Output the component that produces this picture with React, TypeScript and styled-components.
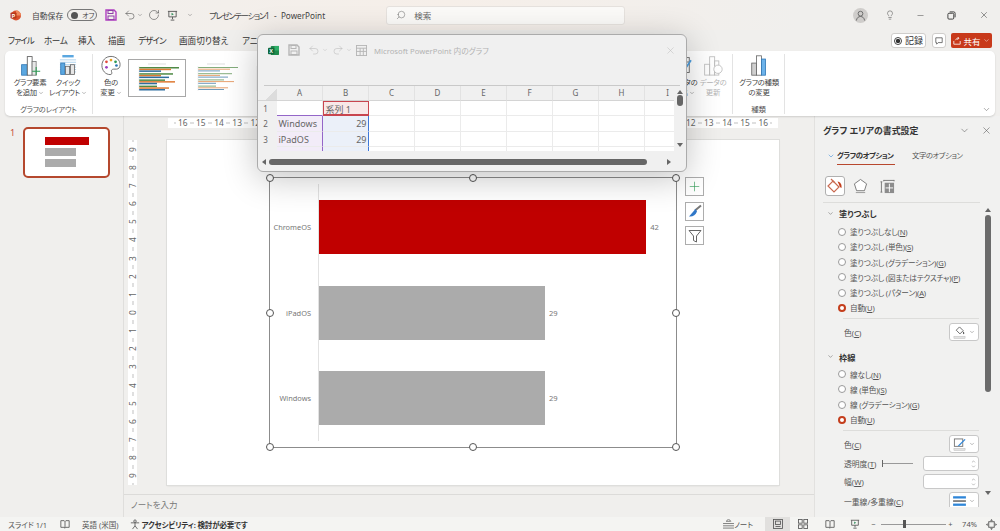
import React from "react";
import styled, { createGlobalStyle } from "styled-components";
import { ChevronDown, ChevronUp, X, Minus, Lightbulb, Search, Undo2, RotateCw, Plus } from "lucide-react";

const Global = createGlobalStyle`
  html, body { margin: 0; padding: 0; background: #f0efed; }
  body { font-family: "Noto Sans", "Noto Sans CJK JP", sans-serif; font-feature-settings: "palt"; color: #444; }
  u { text-underline-offset: 1px; }
`;

const Page = styled.div`
  position: relative; width: 1000px; height: 531px; overflow: hidden;
  display: flex; flex-direction: column; background: #f0efed;
`;
const TitleBar = styled.div`
  height: 30px; display: flex; align-items: center; padding-left: 10px; flex: none;
  background: linear-gradient(90deg, #f0efed 0%, #f6efe9 45%, #f0efed 80%);
  font-size: 7.8px;
`;
const Slot = styled.span<{ $l?: number; $w?: number }>`
  display: inline-flex; align-items: center; justify-content: center; flex: none; white-space: pre;
  margin-left: ${p => p.$l ?? 0}px; ${p => (p.$w ? `width:${p.$w}px;` : "")}
`;
const DocTitle = styled.span`
  width: 113px; margin-left: 16px; flex: none; white-space: pre; font-size: 8.2px;
  b { font-weight: 400; letter-spacing: -1.15px; }
`;
const Toggle = styled.span`
  width: 30px; height: 12px; border: 1px solid #777; border-radius: 7px; box-sizing: border-box;
  display: flex; align-items: center; gap: 4px; padding-left: 3px; font-size: 7px; margin-left: 4px; flex: none;
  &::before { content: ""; width: 7px; height: 7px; border-radius: 50%; background: #555; }
`;
const SearchBox = styled.div`
  width: 239px; height: 19px; box-sizing: border-box; margin-left: 64px; flex: none;
  background: #fbfaf8; border: 1px solid #e6e2de; border-radius: 3px;
  display: flex; align-items: center; gap: 8px; padding-left: 9px; color: #666; font-size: 8.5px;
`;
const Avatar = styled.span`
  width: 15px; height: 15px; border-radius: 50%; background: #cfcdcb; margin-left: 228px; flex: none;
  display: flex; align-items: center; justify-content: center;
`;
const TabRow = styled.div`
  height: 21px; flex: none; display: flex; align-items: center; padding: 0 8px; font-size: 8.6px; color: #333;
`;
const Tab = styled.span<{ $w: number; $sp?: number }>`
  width: ${p => p.$w}px; flex: none; white-space: nowrap; letter-spacing: ${p => p.$sp ?? 0}px;
`;
const RightBtns = styled.div`margin-left: auto; display: flex; align-items: center; gap: 5.5px;`;
const Outline = styled.div<{ $w: number }>`
  height: 15px; width: ${p => p.$w}px; box-sizing: border-box; background: #fff; border: 1px solid #cfcdcb; border-radius: 3px;
  display: flex; align-items: center; justify-content: center; gap: 3px; font-size: 9px; color: #333;
`;
const Share = styled.div`
  height: 15px; width: 41px; box-sizing: border-box; background: #c8391a; color: #fff; border-radius: 2px;
  display: flex; align-items: center; justify-content: center; gap: 2px; font-size: 8.5px;
`;
const RecDot = styled.span`
  width: 8px; height: 8px; border: 1px solid #444; border-radius: 50%; box-sizing: border-box;
  background: radial-gradient(circle, #333 0 2px, #fff 2.3px);
`;
const Ribbon = styled.div`
  height: 65px; flex: none; margin: 0 5px; background: #fff; border-radius: 5px;
  box-shadow: 0 1px 2px rgba(0,0,0,.14); display: flex; position: relative; overflow: hidden;
`;
const Group = styled.div<{ $w?: number; $grow?: boolean; $plain?: boolean }>`
  ${p => (p.$w ? `width:${p.$w}px; flex:none;` : "")} ${p => (p.$grow ? "flex:1;min-width:0;" : "")}
  border-right: ${p => (p.$plain ? "none" : "1px solid #e3e3e3")}; margin: 3px 0 2px; display: flex; flex-direction: column; box-sizing: border-box;
`;
const GroupBody = styled.div`height: 50px; flex: none; display: flex; padding-top: 1px; box-sizing: border-box; overflow: hidden;`;
const GroupLabel = styled.div`height: 10px; text-align: center; font-size: 7.4px; color: #555; line-height: 10px; white-space: nowrap; letter-spacing: -.2px;`;
const RBtn = styled.div<{ $w: number; $l?: number; $off?: boolean }>`
  width: ${p => p.$w}px; margin-left: ${p => p.$l ?? 0}px; flex: none; display: flex; flex-direction: column; align-items: center;
  color: ${p => (p.$off ? "#b5b5b5" : "#444")}; text-align: center;
`;
const RIcon = styled.span`height: 21px; display: flex; align-items: flex-end; flex: none; margin-bottom: 1px;`;
const RText = styled.span`
  font-size: 7.4px; line-height: 10px; letter-spacing: -.25px; white-space: nowrap;
  svg { vertical-align: -1px; margin-left: 1px; }
`;
const GallerySlot = styled.span<{ $l: number }>`display: flex; align-items: flex-start; flex: none; margin-left: ${p => p.$l}px;`;
const Gallery = styled.div<{ $sel?: boolean }>`
  width: 58px; height: 38px; flex: none; box-sizing: border-box; margin-top: 4px; background: #fff;
  border: 1px solid ${p => (p.$sel ? "#a8a8a8" : "transparent")}; display: flex; align-items: center; justify-content: center;
`;
const RibbonCaret = styled.span`position: absolute; right: 4px; bottom: 2px; display: flex; color: #555;`;

const Body = styled.div`flex: 1; min-height: 0; display: flex;`;
const Thumbs = styled.div`
  width: 124px; flex: none; box-sizing: border-box; border-right: 1px solid #dfdedc; display: flex; align-items: flex-start;
  padding: 11px 0 0 10px; gap: 10px;
`;
const ThumbNo = styled.span`font-size: 9px; color: #c8503a; line-height: 11px; width: 3px;`;
const ThumbCard = styled.div`
  width: 87px; height: 51px; box-sizing: border-box; background: #fff; border: 2px solid #b5482e; border-radius: 5px;
  display: flex; flex-direction: column; gap: 3px; padding: 8px 0 0 20px;
`;
const ThumbBar = styled.span<{ $w: number; $c: string }>`display: block; height: 8px; background: ${p => p.$c}; width: ${p => p.$w}px;`;
const Center = styled.div`width: 691px; flex: none; display: flex; flex-direction: column; border-right: 1px solid #e2e1df; box-sizing: border-box;`;
const RulerH = styled.div`
  margin: 2px 0 0 44px; width: 610px; height: 10px; background: #fff; display: flex; justify-content: center; flex: none;
`;
const Stage = styled.div`flex: 1; min-height: 0; display: flex; padding: 12px 0 0 4px; align-items: flex-start;`;
const RulerV = styled.div`
  width: 9px; height: 345px; background: #fff; display: flex; flex-direction: column; justify-content: center; align-items: center; flex: none;
`;
const RCell = styled.span`
  width: 18.15px; height: 10px; flex: none; display: flex; align-items: center; justify-content: center;
  font-size: 8.4px; color: #666; line-height: 10px; background-repeat: no-repeat;
  background-image: radial-gradient(circle, #999 .5px, transparent .8px), radial-gradient(circle, #999 .5px, transparent .8px);
  background-size: 2px 2px, 2px 2px; background-position: 0 4px, 100% 4px;
`;
const VCell = styled.span`
  height: 18.15px; width: 9px; flex: none; display: flex; align-items: center; justify-content: center;
  font-size: 8.4px; color: #666; line-height: 9px;
  background-image: radial-gradient(circle, #999 .5px, transparent .8px), radial-gradient(circle, #999 .5px, transparent .8px);
  background-repeat: no-repeat; background-size: 2px 2px, 2px 2px; background-position: 4px 0, 4px 100%;
  b { font-weight: 400; display: block; transform: rotate(-90deg); }
`;
const Slide = styled.div`
  width: 612px; height: 345px; margin-left: 30px; flex: none; box-sizing: border-box; background: #fff;
  box-shadow: 0 0 0 1px #dededc, 0 1px 2px rgba(0,0,0,.1); padding: 37px 0 0 102px;
`;
const Chart = styled.div`
  position: relative; width: 408px; height: 271px; box-sizing: border-box; border: 1px solid #8c8c8c; padding: 6px 0 6px 48px;
`;
const Handle = styled.span<{ $x: number; $y: number }>`
  position: absolute; width: 8px; height: 8px; box-sizing: border-box; background: #fff; border: 1.5px solid #555; border-radius: 50%;
  left: calc(${p => p.$x}% - 4px); top: calc(${p => p.$y}% - 4px);
`;
const Plot = styled.div`height: 100%; border-left: 1px solid #e2e2e2; display: flex; flex-direction: column;`;
const Row = styled.div`flex: 1; display: flex; align-items: center; position: relative;`;
const CatLabel = styled.span`
  position: absolute; right: 100%; margin-right: 8px; font-size: 7.4px; color: #777; white-space: nowrap;
`;
const Bar = styled.div<{ $c: string }>`height: 54px; background: ${p => p.$c};`;
const Val = styled.span`font-size: 7.6px; color: #777; margin-left: 4px;`;
const ChartTools = styled.div`position: absolute; left: 415px; top: -1px; display: flex; flex-direction: column; gap: 5.5px;`;
const ToolBtn = styled.div`
  width: 19px; height: 19px; box-sizing: border-box; background: #fff; border: 1px solid #adadad;
  display: flex; align-items: center; justify-content: center;
`;
const Notes = styled.div`
  height: 23px; flex: none; box-sizing: border-box; border-top: 1px solid #dcdbd9; padding: 2px 0 0 7px; font-size: 8.5px; color: #777; line-height: 16px;
`;

const Pane = styled.div`
  flex: 1; min-width: 0; display: flex; flex-direction: column; box-sizing: border-box; background: #f1f1f0;
  padding: 0 0 10px 8px; overflow: hidden;
`;
const PaneHead = styled.div`
  height: 24px; margin-top: 2px; flex: none; display: flex; align-items: center; font-size: 8.9px; font-weight: 700; color: #333; padding-right: 8px;
  span { flex: 1; white-space: nowrap; }
  svg { margin-left: 11px; color: #555; }
`;
const PaneTabs = styled.div`
  height: 23px; box-sizing: border-box; flex: none; display: flex; align-items: flex-start; padding: 6px 0 0 2px; font-size: 7.4px; letter-spacing: -.5px;
`;
const PaneTab = styled.div<{ $on?: boolean; $l: number }>`
  margin-left: ${p => p.$l}px; height: 17px; box-sizing: border-box; white-space: nowrap; line-height: 15px;
  font-weight: ${p => (p.$on ? 700 : 400)}; color: ${p => (p.$on ? "#333" : "#555")};
  ${p => (p.$on ? "width:58px;" : "")}
  border-bottom: ${p => (p.$on ? "1.3px solid #b8482e" : "none")};
`;
const IconRow = styled.div`
  height: 38px; flex: none; margin-right: 20px; box-sizing: border-box; border-bottom: 1px solid #dddddb; display: flex; align-items: flex-start; padding: 11px 0 0 2px;
`;
const IconBtn = styled.div<{ $on?: boolean; $l: number }>`
  width: 20px; height: 20px; box-sizing: border-box; margin-left: ${p => p.$l}px; border-radius: 3px;
  display: flex; align-items: center; justify-content: center;
  ${p => (p.$on ? "background:#fff;border:1px solid #b0b0b0;" : "")}
`;
const Scroller = styled.div`flex: 1; min-height: 0; display: flex; overflow: hidden;`;
const Form = styled.div`width: 156px; flex: none; overflow: hidden; padding-top: 1px;`;
const Section = styled.div<{ $mt?: number; $mb: number }>`
  height: 18px; display: flex; align-items: center; gap: 5px; font-size: 8.2px; font-weight: 700; color: #333; padding-left: 4px;
  margin-top: ${p => p.$mt ?? 0}px; margin-bottom: ${p => p.$mb}px;
`;
const RadioRow = styled.div`
  height: 15.25px; display: flex; align-items: center; gap: 4px; padding-left: 15px; font-size: 7.6px; color: #555; white-space: nowrap; letter-spacing: -.16px;
`;
const Radio = styled.span<{ $on?: boolean }>`
  width: 8px; height: 8px; box-sizing: border-box; border-radius: 50%; flex: none; background: #fff;
  border: ${p => (p.$on ? "2.4px solid #c43e1c" : "1px solid #9a9a9a")};
`;
const Divider = styled.div`height: 1px; background: #dddddb; margin: 2px 0 3px 20px;`;
const Field = styled.div<{ $h: number }>`
  height: ${p => p.$h}px; display: flex; align-items: center; padding-left: 21px; font-size: 7.8px; color: #555; white-space: nowrap;
`;
const Drop = styled.div`
  width: 30px; height: 18px; box-sizing: border-box; margin-left: auto; background: #fff; border: 1px solid #c8c8c8; border-radius: 3px;
  display: flex; align-items: center; justify-content: center; gap: 3px; color: #555; flex: none;
`;
const Spin = styled.div`
  width: 56px; height: 15px; box-sizing: border-box; margin-left: auto; background: #fff; border: 1px solid #c8c8c8; border-radius: 3px; flex: none;
  display: flex; flex-direction: column; align-items: flex-end; justify-content: center; padding-right: 2px; color: #666;
`;
const SliderLine = styled.span`
  width: 31px; height: 1px; background: #999; margin-left: 6px; position: relative; flex: none;
  &::before { content: ""; position: absolute; left: 0; top: -3px; width: 1px; height: 7px; background: #666; }
`;
const ScrollCol = styled.div`width: 8px; margin-left: 5px; flex: none; display: flex; flex-direction: column; align-items: center;`;
const ArrowUp = styled.span`
  width: 0; height: 0; border: 3px solid transparent; border-top: 0; border-bottom: 4px solid #666; margin: 5px 0 3px; flex: none;
`;
const ArrowDown = styled.span`
  width: 0; height: 0; border: 3px solid transparent; border-bottom: 0; border-top: 4px solid #666; flex: none; margin-top: 99px;
`;
const Thumb = styled.span`width: 6px; height: 177px; background: #6b6b6b; border-radius: 3px; flex: none;`;

const Status = styled.div`
  height: 14px; flex: none; background: #f4f4f2; display: flex; align-items: center; padding-left: 8px; font-size: 7.5px; color: #555; white-space: nowrap;
`;
const StatusStrong = styled.span`font-weight: 700; color: #333; margin-left: 2px; letter-spacing: -.15px;`;
const StatusRight = styled.div`margin-left: auto; display: flex; align-items: center; padding-right: 3px;`;
const ViewOn = styled.span`
  width: 25px; height: 14px; background: #e1e0de; display: flex; align-items: center; justify-content: center; flex: none; margin-left: 13px;
`;
const ZoomTrack = styled.span`
  width: 65px; height: 1px; background: #999; margin-left: 5px; flex: none; display: flex; align-items: center; padding-left: 22px; box-sizing: border-box;
  &::before { content: ""; width: 3px; height: 8px; background: #555; display: block; }
`;

const XlWindow = styled.div`
  position: absolute; left: 257px; top: 34px; width: 430px; height: 138px; box-sizing: border-box; background: #f0f0f0;
  border: 1px solid #ababab; border-radius: 6px; box-shadow: 0 6px 34px rgba(0,0,0,.24); display: flex; flex-direction: column; overflow: hidden;
`;
const XlTitle = styled.div`
  height: 30px; flex: none; display: flex; align-items: center; padding-left: 10px; font-size: 7.7px; color: #b3b3b3; white-space: nowrap;
`;
const XlBand = styled.div`height: 20px; flex: none;`;
const XlLine = styled.div`height: 1px; flex: none; background: #c9c9c9; margin: 0 6px 0 6px;`;
const XlMid = styled.div`height: 66px; flex: none; display: flex;`;
const Sheet = styled.div`
  width: 416px; height: 65px; flex: none; overflow: hidden; display: grid; background: #fff;
  grid-template-columns: 19px repeat(9, 46px); grid-auto-rows: 15.5px; grid-template-rows: 14.5px;
  font-size: 9px; color: #666; line-height: 15px;
`;
const Corner = styled.div`
  background-color: #f0f0f0; border-bottom: 1px solid #d4d4d4;
  background-image: linear-gradient(135deg, transparent 50%, #dcdcdc 50%);
  background-size: 11px 12px; background-position: 100% 100%; background-repeat: no-repeat;
`;
const ColHead = styled.div`
  background: #f0f0f0; border-bottom: 1px solid #d4d4d4; border-right: 1px solid #e2e2e2; text-align: center; font-size: 8px; color: #666; line-height: 14px;
`;
const RowHead = styled.div`background: #f0f0f0; padding-right: 4px; text-align: center; font-size: 8px; color: #666; line-height: 15px;`;
const Cell = styled.div<{ $kind?: string; $num?: boolean }>`
  box-sizing: border-box; padding: 0 1.5px; white-space: nowrap; overflow: hidden;
  text-align: ${p => (p.$num ? "right" : "left")};
  border-right: 1px solid #ebebeb; border-bottom: 1px solid #ebebeb;
  ${p => p.$kind === "t" && "border-bottom:1.5px solid #9466c8;"}
  ${p => p.$kind === "s" && "background:#f8e8e8;border:1px solid #c8454f;border-bottom-width:2px;"}
  ${p => p.$kind === "c" && "background:#f2ecf8;border-right:1.5px solid #9466c8;"}
  ${p => p.$kind === "v" && "background:#ebf0f9;border-right:1.5px solid #3f78d8;"}
`;
const XlV = styled.div`width: 10px; flex: none; display: flex; flex-direction: column; align-items: center; margin-left: 1px;`;
const XlThumbV = styled.span`width: 6px; height: 11px; background: #666; border-radius: 3px; flex: none;`;
const XlArrowUp = styled(ArrowUp)`margin: 4px 0 1px;`;
const XlArrowDown = styled(ArrowDown)`margin-top: 37px;`;
const XlH = styled.div`flex: 1; display: flex; align-items: center; padding: 0 14px 0 4px; gap: 3px;`;
const XlArrowL = styled.span`width: 0; height: 0; border: 3px solid transparent; border-left: 0; border-right: 4px solid #666;`;
const XlArrowR = styled.span`width: 0; height: 0; border: 3px solid transparent; border-right: 0; border-left: 4px solid #666; margin-left: 17px;`;
const XlHThumb = styled.span`width: 378px; height: 6px; background: #666; border-radius: 3px; flex: none;`;

const I = { stroke: "#555", fill: "none", strokeWidth: 1 } as const;

const PptLogo = () => (
  <svg width="11" height="11" viewBox="0 0 22 22"><circle cx="12" cy="11" r="10" fill="#d9502c" /><path d="M12 11V1a10 10 0 0 1 10 10z" fill="#ef8a5c" /><rect x="1" y="5" width="12" height="12" rx="1.5" fill="#b7371a" /><text x="7" y="15" fontSize="10" fill="#fff" textAnchor="middle" fontFamily="Liberation Sans" fontWeight="700">P</text></svg>
);
const SaveIcon = ({ c = "#8e3fa8", o = "#b03fc0" }: { c?: string; o?: string }) => (
  <svg width="12" height="12" viewBox="0 0 12 12"><path d="M1 1h8l2 2v8H1z" fill="none" stroke={o} strokeWidth="1.4" /><rect x="3" y="1.5" width="5" height="3" fill="none" stroke={c} /><rect x="3" y="7" width="6" height="3.6" fill="none" stroke={c} /></svg>
);
const PresentIcon = ({ s = 11 }: { s?: number }) => (
  <svg width={s} height={s} viewBox="0 0 12 12"><path d="M1 1.5h10M2 1.5v6h8v-6M6 7.5V10M4 11h4" {...I} /><path d="M5 3l2.4 1.5L5 6z" fill="#2f8f5a" /></svg>
);
const Person = () => (
  <svg width="11" height="11" viewBox="0 0 12 12"><circle cx="6" cy="4" r="2.6" fill="none" stroke="#666" /><path d="M1.5 11.5c.5-3 2.2-4.4 4.5-4.4s4 1.4 4.5 4.4" fill="none" stroke="#666" /></svg>
);
const RestoreIcon = () => (
  <svg width="9" height="9" viewBox="0 0 10 10"><rect x="1" y="2.5" width="6.5" height="6.5" rx="1.2" {...I} stroke="#333" /><path d="M3 1h4.5A1.5 1.5 0 0 1 9 2.5V7" {...I} stroke="#333" /></svg>
);
const AddElement = () => (
  <svg width="23" height="21" viewBox="0 0 28 26"><rect x="3" y="12" width="7" height="13" fill="#5aa7e0" stroke="#2f77b5" /><rect x="10" y="2" width="6" height="23" fill="#fff" stroke="#555" /><rect x="16" y="8" width="5" height="17" fill="#e7e7e7" stroke="#777" /><path d="M21 15v10M16 20h10" stroke="#2e9a54" strokeWidth="1.3" /></svg>
);
const QuickLayout = () => (
  <svg width="20" height="21" viewBox="0 0 22 26"><rect x="4" y="0" width="14" height="3" fill="#5aa7e0" /><path d="M1 6h20M1 9h20M1 12h20M1 15h20M1 18h20M1 21h20" stroke="#9cc9ea" /><rect x="2" y="10" width="5" height="14" fill="#5aa7e0" stroke="#2f77b5" /><rect x="8" y="14" width="5" height="10" fill="#e7e7e7" stroke="#666" /><rect x="14" y="12" width="5" height="12" fill="#e7e7e7" stroke="#666" /></svg>
);
const Palette = () => (
  <svg width="20" height="21" viewBox="0 1 22 22"><path d="M11 2C5 2 1 6.5 1 12s4 10 9 10c2.5 0 2-2.5 1.5-3.5S12 16 14 16h3c2.5 0 4-2 4-5 0-5-4.5-9-10-9z" fill="#fff" stroke="#666" /><circle cx="6" cy="8" r="1.5" fill="#e24a3b" /><circle cx="11" cy="6" r="1.5" fill="#e8a020" /><circle cx="16" cy="8" r="1.5" fill="#2e9a54" /><circle cx="17" cy="12" r="1.5" fill="#2f77b5" /><circle cx="6" cy="14" r="1.5" fill="#9a3fc0" /></svg>
);
const GalleryChart = ({ faint }: { faint?: boolean }) => {
  const rows = [[40, 32, 22], [34, 22, 30], [26, 36, 18], [18, 30, 26]];
  const cols = ["#4f8a45", "#de7a33", "#2f6f9f"];
  return (
    <svg width="50" height="32" viewBox="0 0 50 32">
      <rect x="16" y="1.5" width="18" height="1" fill="#ddd" />
      {rows.map((r, i) => r.map((w, j) => (
        <rect key={`${i}-${j}`} x="7" y={5 + i * 6.2 + j * 1.7} width={w} height={faint ? 1 : 1.5} fill={cols[j]} opacity={faint ? 0.7 : 1} />
      )))}
      <path d="M7 4v25" stroke="#e2e2e2" strokeWidth=".5" />
    </svg>
  );
};
const DataRefresh = () => (
  <svg width="20" height="21" viewBox="0 0 24 25"><rect x="2" y="11" width="6" height="13" fill="none" stroke="#bbb" /><rect x="8" y="2" width="6" height="22" fill="none" stroke="#bbb" /><rect x="14" y="7" width="5" height="17" fill="none" stroke="#bbb" /><circle cx="18" cy="17" r="5" fill="#fff" stroke="#bbb" /></svg>
);
const ChangeType = () => (
  <svg width="18" height="21" viewBox="0 0 20 26"><rect x="1" y="10" width="6" height="15" fill="#cfcfcf" stroke="#666" /><rect x="7" y="1" width="6" height="24" fill="#fff" stroke="#666" /><rect x="13" y="5" width="5" height="20" fill="#6db3ea" stroke="#2f77b5" /></svg>
);
const EditData = () => (
  <svg width="18" height="21" viewBox="0 0 20 24"><rect x="1" y="3" width="15" height="17" fill="#fff" stroke="#666" /><path d="M1 8h15M8 3v17" stroke="#666" /><path d="M18 6L8 21" stroke="#4d9fe0" strokeWidth="2" /></svg>
);
const XlLogo = () => (
  <svg width="11" height="11" viewBox="0 0 12 12"><rect x="3" y="1" width="9" height="10" rx="1" fill="#1f8a4d" /><rect x="7" y="1" width="5" height="5" fill="#2fae68" /><rect x="0" y="3" width="7" height="7" rx="1" fill="#10693a" /><text x="3.5" y="8.6" fontSize="6" fill="#fff" textAnchor="middle" fontFamily="Liberation Sans" fontWeight="700">X</text></svg>
);
const GridIcon = () => (
  <svg width="11" height="11" viewBox="0 0 12 12"><rect x=".5" y=".5" width="11" height="11" fill="none" stroke="#b5b5b5" /><path d="M.5 3.5h11M.5 7h11M4.5 3.5v8M8 3.5v8" stroke="#b5b5b5" /></svg>
);
const Brush = () => (
  <svg width="14" height="14" viewBox="0 0 14 14"><path d="M13 1.500L7 6.500" stroke="#777" strokeWidth="2" /><path d="M7.500 5L1 12.500c3.500.5 6.500-1 8-5z" fill="#2f77c8" /></svg>
);
const Funnel = () => (
  <svg width="14" height="14" viewBox="0 0 14 14"><path d="M1 1.500h12L8.500 7v6L5.500 11.500V7z" fill="#fff" stroke="#666" /></svg>
);
const FillIcon = () => (
  <svg width="16" height="16" viewBox="0 0 16 16"><path d="M6 3l6 6-5 5-6-6z" fill="#fff" stroke="#c96a50" strokeWidth="1.2" /><path d="M4 1l3.500 3.500" stroke="#c96a50" strokeWidth="1.2" /><path d="M10.500 3.500c3 .5 4.500 3 4 6.500-1.500-.5-2-1.500-2.500-3.500z" fill="#c43e1c" /></svg>
);
const Pentagon = () => (
  <svg width="15" height="16" viewBox="0 0 16 17"><path d="M8 1.500l6.500 4.700-2.300 7.300H3.800L1.500 6.200z" fill="#fff" stroke="#777" /><path d="M3 15.500h10" stroke="#999" /></svg>
);
const SizeIcon = () => (
  <svg width="15" height="15" viewBox="0 0 16 16"><path d="M4 1.500h11M1.500 3v11M.5 3h2M.5 14h2M4 1v1.500M15 1v1.500" stroke="#777" fill="none" /><rect x="5" y="4" width="10" height="11" fill="#8c8c8c" /><path d="M10 5v9M6 9.500h8" stroke="#fff" /></svg>
);
const FillSwatch = () => (
  <svg width="13" height="13" viewBox="0 0 14 14"><path d="M7 1l4 4-3.500 3.500-4-4z" fill="#fff" stroke="#666" /><path d="M11 6c1.500 1 1.500 2.500.5 3-1-.5-1-2-.5-3z" fill="#555" /><rect x="1" y="11" width="12" height="2.500" fill="#e3e3e3" stroke="#bbb" strokeWidth=".5" /></svg>
);
const PenSwatch = () => (
  <svg width="13" height="13" viewBox="0 0 14 14"><rect x="1.500" y="1" width="9" height="8" fill="#fff" stroke="#777" /><path d="M12.500 1L6 7.500 5 9l2-.6 6.500-6.500z" fill="#2f86d8" /><rect x="1" y="11" width="12" height="2.500" fill="#e3e3e3" stroke="#bbb" strokeWidth=".5" /></svg>
);
const LineSwatch = () => (
  <svg width="13" height="11" viewBox="0 0 14 12"><path d="M0 1.500h14" stroke="#2f86d8" strokeWidth="2.500" /><path d="M0 5.500h14" stroke="#555" strokeWidth="1.500" /><path d="M0 9.500h14" stroke="#2f86d8" strokeWidth="2.500" /></svg>
);
const Book = () => (
  <svg width="10" height="10" viewBox="0 0 12 12"><path d="M1 2h4l1 1 1-1h4v8H7l-1 1-1-1H1zM6 3v8" {...I} /></svg>
);
const Access = () => (
  <svg width="10" height="11" viewBox="0 0 12 13"><circle cx="6" cy="2.500" r="1.500" {...I} /><path d="M1 4.500h10M6 4.500V8M6 8l-3 4M6 8l3 4" {...I} /></svg>
);
const NotesIcon = () => (
  <svg width="11" height="10" viewBox="0 0 12 11"><path d="M6 0L3.500 2.500h5zM0 5h12M0 7.500h12M0 10h12" stroke="#555" strokeWidth=".8" fill="none" /></svg>
);
const NormalView = () => (
  <svg width="10" height="10" viewBox="0 0 12 12"><rect x=".5" y=".5" width="11" height="11" {...I} /><rect x="3" y="2.500" width="6" height="4" {...I} /><path d="M3 9h6" {...I} /></svg>
);
const SorterView = () => (
  <svg width="10" height="10" viewBox="0 0 12 12"><rect x=".5" y=".5" width="4.500" height="4.500" {...I} /><rect x="7" y=".5" width="4.500" height="4.500" {...I} /><rect x=".5" y="7" width="4.500" height="4.500" {...I} /><rect x="7" y="7" width="4.500" height="4.500" {...I} /></svg>
);
const FitIcon = () => (
  <svg width="11" height="11" viewBox="0 0 12 12"><rect x="3" y="3" width="6" height="6" {...I} /><path d="M6 0L4.500 1.800h3zM6 12l-1.500-1.800h3zM0 6l1.800-1.500v3zM12 6l-1.800-1.500v3z" fill="#555" /></svg>
);
const Caret = ({ s = 7, c = "#555" }: { s?: number; c?: string }) => <ChevronDown size={s} color={c} strokeWidth={1.6} />;

const HAND: [number, number][] = [[0, 0], [50, 0], [100, 0], [0, 50], [100, 50], [0, 100], [50, 100], [100, 100]];
const DATA = [
  { name: "ChromeOS", v: 42, c: "#c00000" },
  { name: "iPadOS", v: 29, c: "#ababab" },
  { name: "Windows", v: 29, c: "#ababab" },
];
const COLS = ["A", "B", "C", "D", "E", "F", "G", "H", "I"];
const RULER = [16,15,14,13,12,11,10,9,8,7,6,5,4,3,2,1,0,1,2,3,4,5,6,7,8,9,10,11,12,13,14,15,16];
const VRULER = [9,8,7,6,5,4,3,2,1,0,1,2,3,4,5,6,7,8,9];
const SHEET: { t: string; kind?: string; num?: boolean }[][] = [
  [{ t: "", kind: "t" }, { t: "系列 1", kind: "s" }],
  [{ t: "Windows", kind: "c" }, { t: "29", kind: "v", num: true }],
  [{ t: "iPadOS", kind: "c" }, { t: "29", kind: "v", num: true }],
  [{ t: "", kind: "c" }, { t: "", kind: "v" }],
];
const FILLS: [string, string, boolean?][] = [
  ["塗りつぶしなし(", "N"], ["塗りつぶし (単色)(", "S"], ["塗りつぶし (グラデーション)(", "G"],
  ["塗りつぶし (図またはテクスチャ)(", "P"], ["塗りつぶし (パターン)(", "A"], ["自動(", "U", true],
];
const LINES: [string, string, boolean?][] = [
  ["線なし(", "N"], ["線 (単色)(", "S"], ["線 (グラデーション)(", "G"], ["自動(", "U", true],
];
const Radios = ({ items }: { items: [string, string, boolean?][] }) => (
  <>
    {items.map(([a, k, on]) => (
      <RadioRow key={a}><Radio $on={on} /><span>{a}<u>{k}</u>)</span></RadioRow>
    ))}
  </>
);
const SpinBox = () => (
  <Spin><ChevronUp size={5} strokeWidth={2} /><ChevronDown size={5} strokeWidth={2} /></Spin>
);

export default function App() {
  return (
    <Page>
      <Global />
      <TitleBar>
        <PptLogo />
        <Slot $l={11}>自動保存</Slot>
        <Toggle>オフ</Toggle>
        <Slot $l={8}><SaveIcon /></Slot>
        <Slot $l={7}><Undo2 size={12} strokeWidth={1.1} color="#444" /></Slot>
        <Slot $l={1}><Caret s={6} /></Slot>
        <Slot $l={5}><RotateCw size={12} strokeWidth={1.1} color="#444" /></Slot>
        <Slot $l={7}><PresentIcon /></Slot>
        <Slot $l={9}><Caret s={6} /></Slot>
        <DocTitle><b>プレゼンテーション</b>1  -  PowerPoint</DocTitle>
        <SearchBox><Search size={10} strokeWidth={1.2} style={{ transform: "scaleX(-1)" }} />検索</SearchBox>
        <Avatar><Person /></Avatar>
        <Slot $l={17}><Lightbulb size={10} strokeWidth={1.2} color="#444" /></Slot>
        <Slot $l={21}><Minus size={9} strokeWidth={1.2} color="#333" /></Slot>
        <Slot $l={22}><RestoreIcon /></Slot>
        <Slot $l={23}><X size={10} strokeWidth={1.2} color="#333" /></Slot>
      </TitleBar>
      <TabRow>
        <Tab $w={36} $sp={-1}>ファイル</Tab>
        <Tab $w={34} $sp={-.4}>ホーム</Tab>
        <Tab $w={30}>挿入</Tab>
        <Tab $w={30}>描画</Tab>
        <Tab $w={41} $sp={-1}>デザイン</Tab>
        <Tab $w={63}>画面切り替え</Tab>
        <Tab $w={20}>アニ</Tab>
        <RightBtns>
          <Outline $w={35}><RecDot />記録</Outline>
          <Outline $w={14}><svg width="8" height="8" viewBox="0 0 10 10"><path d="M1 1h8v6H4L2 9V7H1z" {...I} /></svg></Outline>
          <Share><svg width="8" height="8" viewBox="0 0 10 10"><path d="M1 5v4h8V5M3 4c1-2 2.500-2.500 4-2.500M5.500 0L7.500 1.500 5.500 3.500" fill="none" stroke="#fff" /></svg>共有<Caret s={7} c="#fff" /></Share>
        </RightBtns>
      </TabRow>
      <Ribbon>
        <Group $w={88}>
          <GroupBody>
            <RBtn $w={36} $l={7}><RIcon><AddElement /></RIcon><RText>グラフ要素<br />を追加<Caret s={6} /></RText></RBtn>
            <RBtn $w={36} $l={2}><RIcon><QuickLayout /></RIcon><RText>クイック<br />レイアウト<Caret s={6} /></RText></RBtn>
          </GroupBody>
          <GroupLabel>グラフのレイアウト</GroupLabel>
        </Group>
        <Group $grow>
          <GroupBody>
            <RBtn $w={24} $l={6}><RIcon><Palette /></RIcon><RText>色の<br />変更<Caret s={6} /></RText></RBtn>
            <GallerySlot $l={5}><Gallery $sel><GalleryChart /></Gallery></GallerySlot>
            <GallerySlot $l={1}><Gallery><GalleryChart faint /></Gallery></GallerySlot>
            <GallerySlot $l={1}><Gallery><GalleryChart /></Gallery></GallerySlot>
          </GroupBody>
        </Group>
        <Group $w={64}>
          <GroupBody>
            <RBtn $w={30}><RIcon><EditData /></RIcon><RText>データの<br />編集<Caret s={6} /></RText></RBtn>
            <RBtn $w={24} $l={2} $off><RIcon><DataRefresh /></RIcon><RText>データの<br />更新</RText></RBtn>
          </GroupBody>
          <GroupLabel />
        </Group>
        <Group $w={52}>
          <GroupBody>
            <RBtn $w={52}><RIcon><ChangeType /></RIcon><RText>グラフの種類<br />の変更</RText></RBtn>
          </GroupBody>
          <GroupLabel>種類</GroupLabel>
        </Group>
        <Group $w={210} $plain />
        <RibbonCaret><ChevronDown size={9} strokeWidth={1.3} /></RibbonCaret>
      </Ribbon>
      <Body>
        <Thumbs>
          <ThumbNo>1</ThumbNo>
          <ThumbCard>
            <ThumbBar $w={44} $c="#c00000" />
            <ThumbBar $w={31} $c="#ababab" />
            <ThumbBar $w={31} $c="#ababab" />
          </ThumbCard>
        </Thumbs>
        <Center>
          <RulerH>{RULER.map((n, i) => <RCell key={i}>{n}</RCell>)}</RulerH>
          <Stage>
            <RulerV>{VRULER.map((n, i) => <VCell key={i}><b>{n}</b></VCell>)}</RulerV>
            <Slide>
              <Chart>
                <Plot>
                  {DATA.map(d => (
                    <Row key={d.name}>
                      <CatLabel>{d.name}</CatLabel>
                      <Bar $c={d.c} style={{ width: `${d.v * 7.79}px` }} />
                      <Val>{d.v}</Val>
                    </Row>
                  ))}
                </Plot>
                {HAND.map(([x, y]) => <Handle key={`${x}-${y}`} $x={x} $y={y} />)}
                <ChartTools>
                  <ToolBtn><Plus size={15} strokeWidth={1} color="#2e9a54" /></ToolBtn>
                  <ToolBtn><Brush /></ToolBtn>
                  <ToolBtn><Funnel /></ToolBtn>
                </ChartTools>
              </Chart>
            </Slide>
          </Stage>
          <Notes>ノートを入力</Notes>
        </Center>
        <Pane>
          <PaneHead><span>グラフ エリアの書式設定</span><ChevronDown size={11} strokeWidth={1.2} /><X size={11} strokeWidth={1.2} /></PaneHead>
          <PaneTabs>
            <Slot $l={2} style={{ height: 15 }}><Caret s={8} c="#2f86d8" /></Slot>
            <PaneTab $on $l={2}>グラフのオプション</PaneTab>
            <PaneTab $l={17}>文字のオプション</PaneTab>
          </PaneTabs>
          <IconRow>
            <IconBtn $on $l={0}><FillIcon /></IconBtn>
            <IconBtn $l={5}><Pentagon /></IconBtn>
            <IconBtn $l={7}><SizeIcon /></IconBtn>
          </IconRow>
          <Scroller>
            <Form>
              <Section $mb={2}><Caret s={7} />塗りつぶし</Section>
              <Radios items={FILLS} />
              <Divider />
              <Field $h={21}><span>色(<u>C</u>)</span><Drop><FillSwatch /><Caret s={6} /></Drop></Field>
              <Section $mt={5} $mb={1}><Caret s={7} />枠線</Section>
              <Radios items={LINES} />
              <Divider />
              <Field $h={21}><span>色(<u>C</u>)</span><Drop><PenSwatch /><Caret s={6} /></Drop></Field>
              <Field $h={18}><span>透明度(<u>T</u>)</span><SliderLine /><SpinBox /></Field>
              <Field $h={18}><span>幅(<u>W</u>)</span><SpinBox /></Field>
              <Field $h={21}><span>一重線/多重線(<u>C</u>)</span><Drop><LineSwatch /><Caret s={6} /></Drop></Field>
            </Form>
            <ScrollCol>
              <ArrowUp />
              <Thumb />
              <ArrowDown />
            </ScrollCol>
          </Scroller>
        </Pane>
      </Body>
      <Status>
        <span>スライド 1/1</span>
        <Slot $l={13}><Book /></Slot>
        <Slot $l={12}>英語 (米国)</Slot>
        <Slot $l={11}><Access /></Slot>
        <StatusStrong>アクセシビリティ: 検討が必要です</StatusStrong>
        <StatusRight>
          <NotesIcon />
          <Slot $l={1} $w={17}>ノート</Slot>
          <ViewOn><NormalView /></ViewOn>
          <Slot $l={8}><SorterView /></Slot>
          <Slot $l={17}><Book /></Slot>
          <Slot $l={15}><PresentIcon s={10} /></Slot>
          <Slot $l={11} $w={5}>−</Slot>
          <ZoomTrack />
          <Slot $l={2} $w={5}>+</Slot>
          <Slot $l={8} $w={17}>74%</Slot>
          <Slot $l={8}><FitIcon /></Slot>
        </StatusRight>
      </Status>
      <XlWindow>
        <XlTitle>
          <XlLogo />
          <Slot $l={9}><SaveIcon c="#b5b5b5" o="#b5b5b5" /></Slot>
          <Slot $l={8}><Undo2 size={12} strokeWidth={1} color="#b5b5b5" /></Slot>
          <Slot $l={2}><Caret s={6} c="#b5b5b5" /></Slot>
          <Slot $l={4}><Undo2 size={12} strokeWidth={1} color="#b5b5b5" style={{ transform: "scaleX(-1)" }} /></Slot>
          <Slot $l={2}><Caret s={6} c="#b5b5b5" /></Slot>
          <Slot $l={4}><GridIcon /></Slot>
          <Slot $l={7}>Microsoft PowerPoint 内のグラフ</Slot>
          <Slot style={{ marginLeft: "auto", marginRight: 10 }}><X size={11} strokeWidth={1} color="#b5b5b5" /></Slot>
        </XlTitle>
        <XlBand />
        <XlLine />
        <XlMid>
          <Sheet>
            <Corner />
            {COLS.map(c => <ColHead key={c}>{c}</ColHead>)}
            {SHEET.map((r, i) => (
              <React.Fragment key={i}>
                <RowHead>{i < 3 ? i + 1 : ""}</RowHead>
                {COLS.map((c, j) => {
                  const cell = r[j];
                  return <Cell key={c} $kind={cell?.kind} $num={cell?.num}>{cell?.t}</Cell>;
                })}
              </React.Fragment>
            ))}
          </Sheet>
          <XlV>
            <XlArrowUp />
            <XlThumbV />
            <XlArrowDown />
          </XlV>
        </XlMid>
        <XlH>
          <XlArrowL />
          <XlHThumb />
          <XlArrowR />
        </XlH>
      </XlWindow>
    </Page>
  );
}
